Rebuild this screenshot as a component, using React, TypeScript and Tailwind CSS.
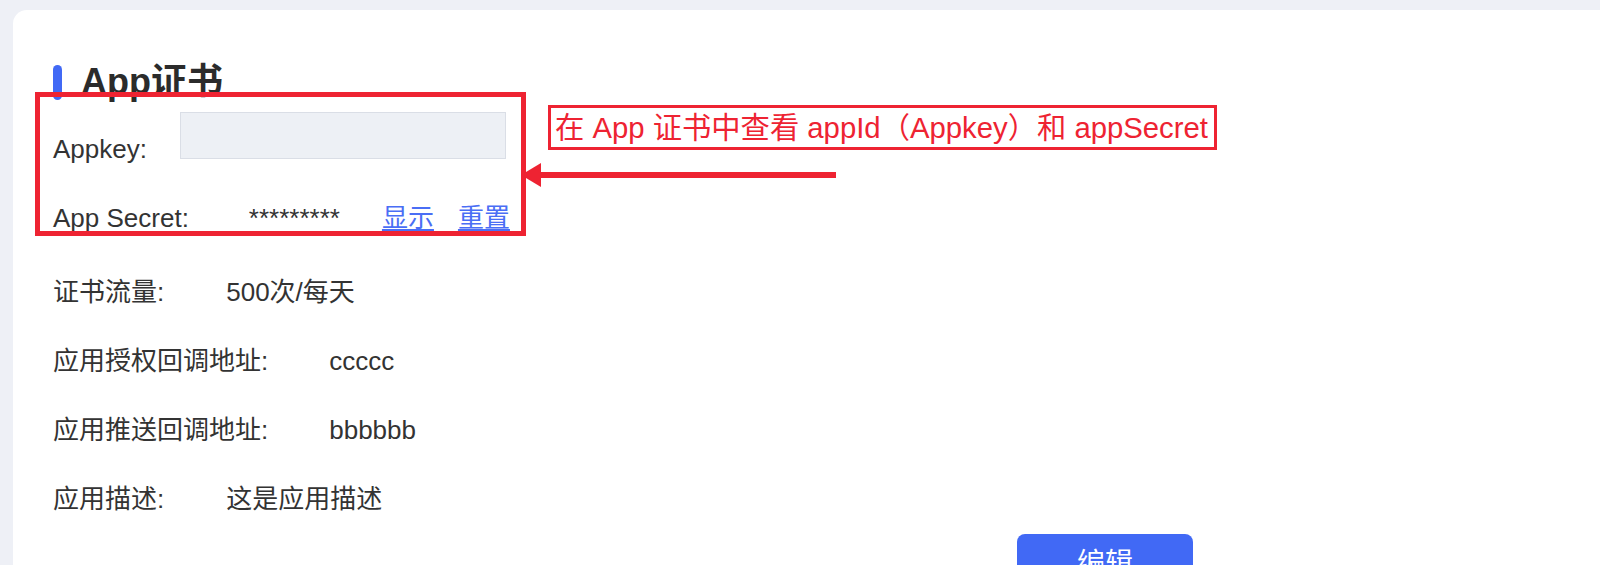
import React from "react";

interface InfoRow {
  label: string;
  value: string;
  gap: string;
}

// Plain text rows under the certificate block
const infoRows: InfoRow[] = [
  { label: "证书流量:", value: "500次/每天", gap: "ml-[62px]" },
  { label: "应用授权回调地址:", value: "ccccc", gap: "ml-[61px]" },
  { label: "应用推送回调地址:", value: "bbbbbb", gap: "ml-[61px]" },
  { label: "应用描述:", value: "这是应用描述", gap: "ml-[62px]" },
];

function Callout() {
  return (
    <>
      {/* highlight around key + secret */}
      <div className="absolute left-[35px] top-[92px] h-[144px] w-[491px] border-[5px] border-[#ee2332]" />

      {/* note box */}
      <div className="absolute left-[548px] top-[105px] flex h-[45px] items-center border-[3px] border-[#ee2332] pl-[4px] pr-[6px] text-[29.3px] leading-none text-[#ee2332]">
        在 App 证书中查看 appId（Appkey）和 appSecret
      </div>

      {/* arrow pointing back at the box */}
      <svg className="absolute left-[521px] top-[163px]" width="315" height="24" viewBox="0 0 315 24">
        <polygon points="0,12 20,0 20,24" fill="#ee2332" />
        <rect x="18" y="9" width="297" height="6" fill="#ee2332" />
      </svg>
    </>
  );
}

export default function App() {
  return (
    <div className="relative h-[565px] overflow-hidden bg-[#eef0f6] pl-[13px] pt-[10px] font-[family-name:Liberation_Sans,Noto_Sans_CJK_SC,sans-serif] text-[#333333]">
      <div className="min-h-[600px] rounded-tl-[14px] bg-white pl-[40px] pt-[54px]">
        {/* Section title */}
        <div className="flex h-[36px] items-center">
          <span className="h-[35px] w-[9px] rounded-full bg-[#4169f5]" />
          <h2 className="ml-[19px] text-[36px] font-bold leading-[36px] text-[#2b2b2b]">App证书</h2>
        </div>

        {/* Appkey */}
        <div className="mt-[12px] flex items-end">
          <span className="text-[26px] leading-[26px]">Appkey:</span>
          <div className="mb-[3px] ml-[33px] h-[47px] w-[326px] border border-[#dadee6] bg-[#edf0f5]" />
        </div>

        {/* App Secret */}
        <div className="mt-[43px] flex items-center text-[26px] leading-[26px]">
          <span>App Secret:</span>
          <span className="ml-[60px]">*********</span>
          <a className="ml-[42px] text-[#4a6ef5] underline underline-offset-[2px]" href="#">
            显示
          </a>
          <a className="ml-[24px] text-[#4a6ef5] underline underline-offset-[2px]" href="#">
            重置
          </a>
        </div>

        {/* Other info */}
        <div className="mt-[48px] flex flex-col gap-[43px]">
          {infoRows.map((row) => (
            <div key={row.label} className="flex text-[26px] leading-[26px]">
              <span>{row.label}</span>
              <span className={row.gap}>{row.value}</span>
            </div>
          ))}
        </div>

        <button className="ml-[964px] mt-[22px] flex h-[60px] w-[176px] items-center justify-center rounded-[8px] bg-[#4169f5] text-[28px] text-white">
          编辑
        </button>
      </div>

      <Callout />
    </div>
  );
}
